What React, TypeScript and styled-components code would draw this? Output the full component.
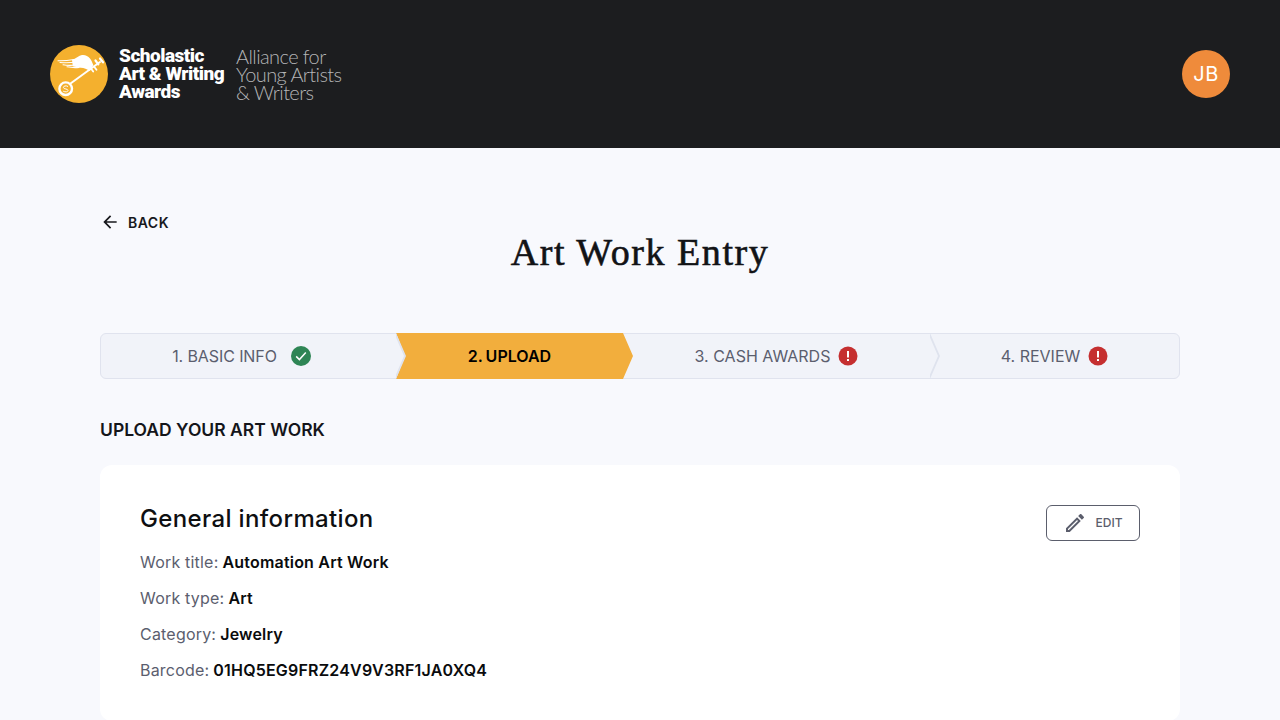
import styled, { createGlobalStyle } from "styled-components";
import { MdOutlineEdit, MdArrowBack } from "react-icons/md";

const GlobalStyle = createGlobalStyle`
  html, body {
    margin: 0;
    padding: 0;
    background: #f8f9fd;
    overflow: hidden;
  }

  * {
    box-sizing: border-box;
  }

  body {
    font-family: Inter, "Liberation Sans", sans-serif;
    color: #0e0f11;
  }
`;

const Header = styled.header`
  display: flex;
  justify-content: space-between;
  align-items: center;
  height: 148px;
  padding: 0 50px;
  background: #1c1d1f;
`;

const Logo = styled.div`
  display: flex;
  align-items: center;
`;

const LogoName = styled.div`
  margin-left: 11px;
  font-family: Roboto, sans-serif;
  font-weight: 900;
  font-size: 19px;
  line-height: 18px;
  letter-spacing: -0.5px;
  color: #fff;
`;

const LogoTagline = styled.div`
  margin-left: 12px;
  font-family: Lato, sans-serif;
  font-weight: 300;
  font-size: 20px;
  line-height: 18px;
  letter-spacing: -0.6px;
  color: #b4b5b7;
`;

const Avatar = styled.div`
  display: flex;
  justify-content: center;
  align-items: center;
  width: 48px;
  height: 48px;
  border-radius: 50%;
  background: #ef8b3b;
  color: #fff;
  font-size: 20px;
  letter-spacing: 0.5px;
`;

const Main = styled.main`
  width: 1080px;
  margin: 0 auto;
  padding-top: 64px;
`;

const BackLink = styled.a`
  display: flex;
  align-items: center;
  gap: 8px;
  height: 20px;
  font-size: 14px;
  font-weight: 600;
  letter-spacing: 0.5px;
  color: #17181c;

  svg {
    font-size: 20px;
  }
`;

const Title = styled.h1`
  margin: -6px 0 0;
  height: 107px;
  font-family: "Liberation Serif", serif;
  font-size: 38px;
  line-height: 52px;
  font-weight: 400;
  letter-spacing: 1.55px;
  text-align: center;
  color: #121316;
  -webkit-text-stroke: 0.6px #121316;
`;

const Stepper = styled.ol`
  display: grid;
  grid-template-columns: 295px 227px 307px 249px;
  height: 46px;
  margin: 0;
  padding: 0;
  list-style: none;
  border: 1px solid #e0e3ee;
  border-radius: 6px;
  background: #f1f3f9;
`;

const Step = styled.li<{ $active?: boolean; $divider?: boolean }>`
  position: relative;
  display: flex;
  justify-content: center;
  align-items: center;
  gap: 9px;
  margin: -1px 0;
  font-size: 16px;
  font-weight: ${(p) => (p.$active ? 600 : 400)};
  color: ${(p) => (p.$active ? "#000" : "#5b5e6e")};
  word-spacing: ${(p) => (p.$active ? "-1px" : "0")};

  &::after {
    content: "";
    display: ${(p) => (p.$divider ? "block" : "none")};
    position: absolute;
    z-index: 1;
    top: 0;
    right: -10px;
    width: 10px;
    height: 46px;
    background: #dfe3ee;
    clip-path: polygon(0 0, 100% 50%, 0 100%, 0 calc(100% - 4.6px), calc(100% - 2px) 50%, 0 4.6px);
  }
`;

const ActiveShape = styled.span`
  position: absolute;
  top: 0;
  left: 0;
  width: 237px;
  height: 46px;
  background: #f2ae3d;
  clip-path: polygon(0 0, 227px 0, 100% 50%, 227px 100%, 0 100%, 9px 50%);
`;

const StepLabel = styled.span`
  position: relative;
`;

const BasicLabel = styled(StepLabel)`
  margin-right: 5px;
  letter-spacing: -0.1px;
`;

const StatusIcon = styled.svg<{ $tight?: boolean }>`
  display: block;
  flex: none;
  width: 20px;
  height: 20px;
  margin-left: ${(p) => (p.$tight ? "-1px" : "0")};
`;

const FirstStep = styled(Step)`
  padding-right: 14px;
`;

const SectionTitle = styled.h2`
  margin: 40px 0 24px;
  font-size: 17.5px;
  line-height: 22px;
  font-weight: 600;
  color: #14151a;
`;

const Card = styled.section`
  position: relative;
  height: 256px;
  padding: 40px;
  border-radius: 12px;
  background: #fff;
`;

const CardTop = styled.div`
  display: flex;
  justify-content: space-between;
  align-items: flex-start;
`;

const CardTitle = styled.h3`
  margin: 0;
  font-size: 24px;
  line-height: 28px;
  font-weight: 500;
  letter-spacing: 0.35px;
  color: #0e0f11;
`;

const EditButton = styled.button`
  display: flex;
  justify-content: center;
  align-items: center;
  gap: 9px;
  width: 94px;
  height: 36px;
  padding: 0 1px 1px 0;
  border: 1px solid #5b5e6c;
  border-radius: 6px;
  background: #fff;
  font-family: inherit;
  font-size: 12px;
  font-weight: 500;
  color: #5b5e6c;

  svg {
    font-size: 24px;
  }
`;

const Fields = styled.dl`
  display: flex;
  flex-direction: column;
  gap: 16px;
  margin: 11px 0 0;
`;

const Field = styled.div`
  display: flex;
  gap: 4px;
  font-size: 16px;
  line-height: 20px;
  letter-spacing: 0.2px;
`;

const FieldName = styled.dt`
  color: #5b5e6e;
`;

const FieldValue = styled.dd`
  margin: 0;
  font-weight: 600;
  color: #0a0b0d;
`;

const CheckIcon = () => (
  <StatusIcon viewBox="0 0 20 20">
    <circle cx="10" cy="10" r="10" fill="#2e8555" />
    <path d="M5.2 10.4l3.2 3.2 6.4-7" fill="none" stroke="#fff" strokeWidth="1.5" />
  </StatusIcon>
);

const AlertIcon = () => (
  <StatusIcon $tight viewBox="0 0 20 20">
    <circle cx="10" cy="10" r="9.5" fill="#c52f30" />
    <rect x="9" y="5" width="2" height="6.5" fill="#fff" />
    <rect x="9" y="13" width="2" height="2" fill="#fff" />
  </StatusIcon>
);

const LogoMark = () => (
  <svg width="58" height="58" viewBox="0 0 58 58">
    <circle cx="29" cy="29" r="29" fill="#f4b02e" />
    {/* wing */}
    <path
      fill="#fff"
      d="M22 15c3.500-1.500 7-4.500 10-5 3-.4 6 .8 8 3.500 1.500 2 2.500 4.500 3.300 6.500l-3.500 6c-2.800-2-5.600-3-9-3.300-3-.3-6-.8-8-1.400z"
    />
    <g fill="none" stroke="#fff" strokeWidth="1.100" strokeLinecap="round">
      <path d="M8 15.700c5 .3 10-.2 16-1.200" />
      <path d="M10 17.500c5 .5 10 .5 16-.5" />
      <path d="M13 19.800c4 .7 9 .8 14 0" />
      <path d="M17 21.800c4 .8 8 1 12 .6" />
    </g>
    {/* key */}
    <g fill="none" stroke="#fff" strokeLinecap="round">
      <path d="M20.500 38.500L50 17" strokeWidth="2" />
      <path d="M45.500 15.500l2.800 3.800M50 13.500l3 3.800" strokeWidth="2.200" />
      <path d="M44 21.500l2.500 3.200M41 23.500l2.200 3" strokeWidth="1.800" />
    </g>
    <circle cx="15.700" cy="43.700" r="6.300" fill="none" stroke="#fff" strokeWidth="2.400" />
    <path
      d="M18 41.500c-1.800-1.200-4.800-.6-4.600 1.200.2 1.500 4.600 1 4.600 2.700 0 1.600-2.800 1.900-4.800.8"
      fill="none"
      stroke="#fff"
      strokeWidth="1"
    />
  </svg>
);

const App = () => {
  const fields = [
    { name: "Work title:", value: "Automation Art Work" },
    { name: "Work type:", value: "Art" },
    { name: "Category:", value: "Jewelry" },
    { name: "Barcode:", value: "01HQ5EG9FRZ24V9V3RF1JA0XQ4" },
  ];

  return (
    <>
      <GlobalStyle />
      <Header>
        <Logo>
          <LogoMark />
          <LogoName>
            Scholastic
            <br />
            Art &amp; Writing
            <br />
            Awards
          </LogoName>
          <LogoTagline>
            Alliance for
            <br />
            Young Artists
            <br />
            &amp; Writers
          </LogoTagline>
        </Logo>
        <Avatar>JB</Avatar>
      </Header>
      <Main>
        <BackLink>
          <MdArrowBack />
          BACK
        </BackLink>
        <Title>Art Work Entry</Title>
        <Stepper>
          <FirstStep $divider>
            <BasicLabel>1. BASIC INFO</BasicLabel>
            <CheckIcon />
          </FirstStep>
          <Step $active>
            <ActiveShape />
            <StepLabel>2. UPLOAD</StepLabel>
          </Step>
          <Step $divider>
            <StepLabel>3. CASH AWARDS</StepLabel>
            <AlertIcon />
          </Step>
          <Step>
            <StepLabel>4. REVIEW</StepLabel>
            <AlertIcon />
          </Step>
        </Stepper>
        <SectionTitle>UPLOAD YOUR ART WORK</SectionTitle>
        <Card>
          <CardTop>
            <CardTitle>General information</CardTitle>
            <EditButton>
              <MdOutlineEdit />
              EDIT
            </EditButton>
          </CardTop>
          <Fields>
            {fields.map((field) => (
              <Field key={field.name}>
                <FieldName>{field.name}</FieldName>
                <FieldValue>{field.value}</FieldValue>
              </Field>
            ))}
          </Fields>
        </Card>
      </Main>
    </>
  );
};

export default App;
